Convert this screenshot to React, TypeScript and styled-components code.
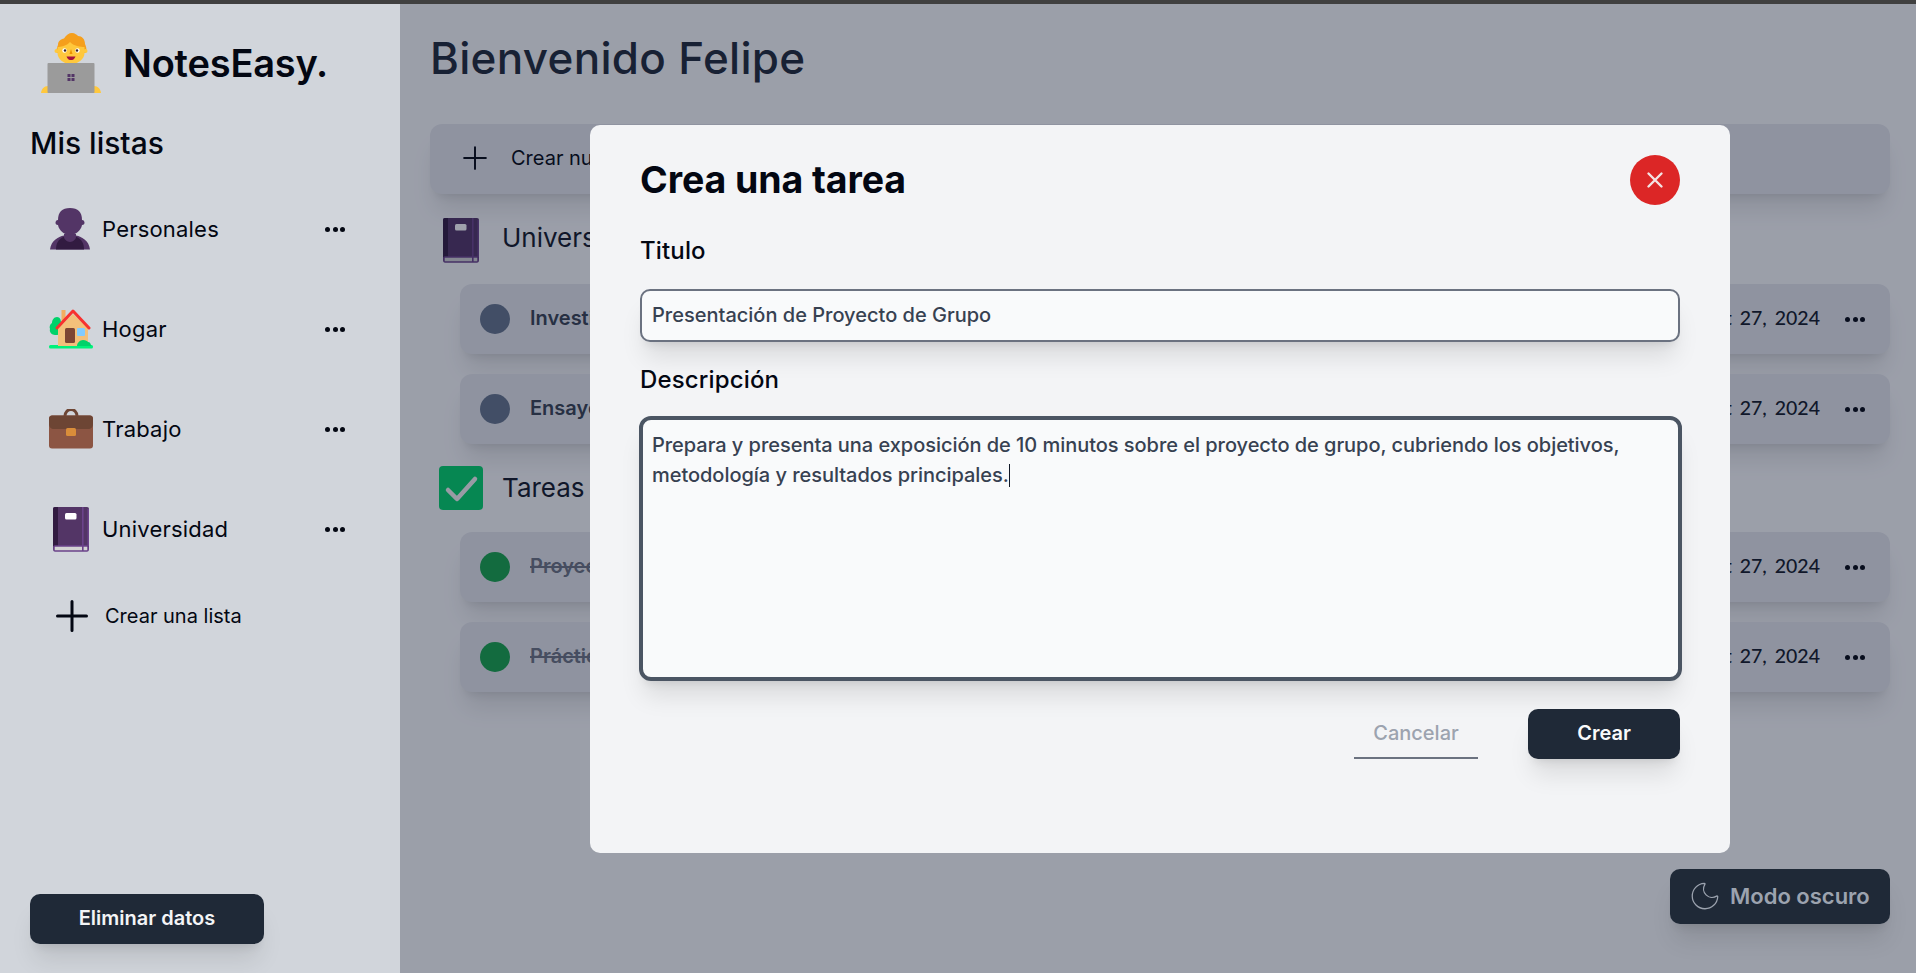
import React from "react";
import styled, { createGlobalStyle } from "styled-components";
import { Moon } from "lucide-react";

const SHADOW_XL = "0 20px 25px -5px rgba(0,0,0,.1),0 8px 10px -6px rgba(0,0,0,.1)";

const Global = createGlobalStyle`
  html, body { margin: 0; padding: 0; height: 100%; overflow: hidden; }
  body { font-family: Inter, "Noto Sans", sans-serif; background: #f9fafb; }
  #root { height: 100%; }
  * { box-sizing: border-box; }
`;

const Shell = styled.div`display:flex;flex-direction:column;height:973px;position:relative;`;
const TopBar = styled.div`height:4px;background:#404040;flex:none;`;
const Body = styled.div`display:flex;flex:1;min-height:0;`;

const Sidebar = styled.aside`
  width:400px;flex:none;background:#d1d5db;display:flex;flex-direction:column;padding:29px 0 29px 30px;color:#030712;
`;
const Brand = styled.div`display:flex;align-items:center;gap:22px;height:60px;padding-left:11px;`;
const BrandName = styled.h1`margin:0;font-size:38px;font-weight:600;letter-spacing:-.2px;color:#030712;`;
const ListsTitle = styled.h2`margin:32px 0 0;font-size:30px;line-height:36px;font-weight:500;color:#030712;`;
const Lists = styled.div`margin-top:18px;width:315px;display:flex;flex-direction:column;`;
const ListItem = styled.div`height:100px;display:flex;align-items:center;padding-left:19px;gap:9px;`;
const ListIcon = styled.div`width:44px;height:48px;flex:none;display:flex;align-items:center;justify-content:center;`;
const ListName = styled.span`flex:1;font-size:22px;font-weight:400;letter-spacing:.2px;color:#030712;`;
const Dots = styled.div`display:flex;gap:2.5px;width:20px;flex:none;
  span{width:5px;height:5px;border-radius:50%;background:#030712;display:block;}
`;
const CreateList = styled.div`height:74px;display:flex;align-items:center;padding-left:26px;gap:17px;font-size:20px;color:#030712;`;
const DangerButton = styled.button`
  margin-top:auto;width:234px;height:50px;border:0;border-radius:10px;background:#1f2937;color:#f3f4f6;font:600 20px Inter,sans-serif;padding:0 0 2px;
  box-shadow:${SHADOW_XL};
`;

const Main = styled.main`flex:1;min-width:0;position:relative;padding:26px 26px 0 30px;background:#f9fafb;overflow:hidden;`;
const Heading = styled.h2`margin:0;font-size:44px;line-height:56px;font-weight:500;letter-spacing:.3px;color:#1f2937;`;
const NewBar = styled.div`
  margin-top:38px;height:70px;border-radius:12px;background:#e5e7eb;display:flex;align-items:center;padding:0 0 2px 33px;gap:24px;font-size:20px;color:#030712;
  box-shadow:${SHADOW_XL};
`;
const SectionHead = styled.div<{ $top: number }>`margin-top:${p => p.$top}px;height:48px;display:flex;align-items:center;font-size:26px;color:#111827;`;
const SectionIcon = styled.div<{ $w: number; $pad: number; $gap: number }>`
  width:${p => p.$w}px;margin-left:${p => p.$pad}px;margin-right:${p => p.$gap}px;flex:none;display:flex;
`;
const SectionName = styled.span<{ $lift: number }>`padding-bottom:${p => p.$lift}px;`;
const TaskRow = styled.div`
  margin:20px 0 0 30px;height:70px;border-radius:12px;background:#e5e7eb;display:flex;align-items:center;padding:0 25px 0 20px;
  box-shadow:${SHADOW_XL};
`;
const Circle = styled.span<{ $done?: boolean }>`width:30px;height:30px;border-radius:50%;flex:none;background:${p => p.$done ? "#16a34a" : "#64748b"};`;
const TaskName = styled.span<{ $done?: boolean }>`
  flex:1;margin-left:20px;padding-bottom:2px;font-size:20px;font-weight:600;color:${p => p.$done ? "#6b7280" : "#374151"};text-decoration:${p => p.$done ? "line-through" : "none"};
`;
const TaskDate = styled.span`font-family:Lato,Inter,sans-serif;font-size:19.500px;word-spacing:3px;font-weight:500;color:#111827;margin-right:25px;padding-bottom:3px;`;

const Overlay = styled.div`
  position:absolute;inset:0;background:rgba(15,23,48,.4);display:flex;align-items:center;justify-content:center;padding-left:4px;
`;
const Modal = styled.section`
  width:1140px;height:728px;background:#f3f4f6;border-radius:10px;padding:30px 50px 0;display:flex;flex-direction:column;
`;
const ModalHeader = styled.div`display:flex;align-items:center;justify-content:space-between;height:50px;`;
const ModalTitle = styled.h3`margin:0;font-size:37.500px;font-weight:700;letter-spacing:-.1px;color:#030712;`;
const CloseButton = styled.button`width:50px;height:50px;border-radius:50%;border:0;background:#dc2626;padding:0;display:flex;align-items:center;justify-content:center;`;
const Label = styled.label<{ $top: number }>`display:block;margin-top:${p => p.$top}px;font-size:24px;line-height:30px;font-weight:500;letter-spacing:.15px;color:#030712;`;
const TitleInput = styled.input`
  display:block;margin-top:23px;width:100%;height:53px;border:2px solid #6b7280;border-radius:10px;background:#f9fafb;padding:0 10px;
  font:500 20px Inter,sans-serif;color:#374151;outline:none;
  box-shadow:${SHADOW_XL};
`;
const DescriptionField = styled.div`
  margin:21px -2px 0 -1px;height:265px;border:4px solid #4b5563;border-radius:12px;background:#f9fafb;padding:10px 9px;
  font-size:20px;line-height:30px;font-weight:500;letter-spacing:-.04px;color:#374151;
  box-shadow:${SHADOW_XL};
`;
const Caret = styled.span`display:inline-block;width:1px;height:23px;background:#111827;vertical-align:-5px;`;
const Actions = styled.div`margin-top:28px;display:flex;justify-content:flex-end;gap:50px;`;
const CancelButton = styled.button`
  width:124px;height:50px;border:0;border-bottom:2px solid #6b7280;background:transparent;padding:0;font:500 20px Inter,sans-serif;color:#9ca3af;
`;
const SubmitButton = styled.button`
  width:152px;height:50px;border:0;border-radius:10px;background:#1f2937;color:#f9fafb;font:600 20px Inter,sans-serif;padding:0 0 2px;
  box-shadow:${SHADOW_XL};
`;
const ThemeButton = styled.button`
  position:absolute;right:26px;bottom:49px;width:220px;height:55px;border:0;border-radius:10px;background:#1f2937;color:#9ca3af;
  display:flex;align-items:center;padding:0 0 2px 18px;gap:8px;font:600 22px Inter,sans-serif;
  box-shadow:${SHADOW_XL};
`;
const BustSvg = styled.svg`margin-left:-3px;`;

const Technologist = () => (
  <svg width="60" height="60" viewBox="0 0 60 60">
    <path d="M0 60c.5-4 3-7 7-7h46c4 0 6.500 3 7 7z" fill="#ffc83d" />
    <path d="M16 20c-1-3 0-6 1-8 0-4 3-6 6-6.500C25 2 28 0 31 0c3 0 5 2 6 3 4 0 7 3 7 8 1 2 2 5 1 9z" fill="#f59f1c" />
    <path d="M16.500 14C19 14 26 13 29 9c3 4 11 5 14.500 5V20c0 6-6 11-13.500 11S16.500 26 16.500 20z" fill="#ffc83d" />
    <circle cx="15.500" cy="18" r="2" fill="#ffc83d" /><circle cx="44.500" cy="18" r="2" fill="#ffc83d" />
    <circle cx="23.500" cy="17.500" r="2.200" fill="#fff" /><circle cx="36.500" cy="17.500" r="2.200" fill="#fff" />
    <circle cx="24" cy="17.500" r="1.200" fill="#372128" /><circle cx="36" cy="17.500" r="1.200" fill="#372128" />
    <path d="M30 16l-1.500 5h3z" fill="#ed9200" />
    <path d="M25.500 23.500h9c-1 3-3 3.500-4.500 3.500s-3.500-.5-4.500-3.500z" fill="#a6133c" />
    <rect x="6.500" y="30" width="47" height="30" rx="1" fill="#9b9b9b" />
    <rect x="26.500" y="41" width="3" height="3" fill="#533566" /><rect x="30.500" y="41" width="3" height="3" fill="#533566" />
    <rect x="26.500" y="45" width="3" height="3" fill="#533566" /><rect x="30.500" y="45" width="3" height="3" fill="#533566" />
  </svg>
);
const Bust = () => (
  <BustSvg width="40" height="42" viewBox="0 0 40 42">
    <path d="M0 41.500C1 33 8 28.500 14 27.500h12C32 28.500 39 33 40 41.500z" fill="#533566" />
    <path d="M6 41.500c0-6 2-10 8-13h12c6 3 8 7 8 13z" fill="#321b41" />
    <path d="M14 26h12v3c0 2-3 5-6 5s-6-3-6-5z" fill="#533566" />
    <path d="M8 12C8 4 12 0 20 0s12 4 12 12c2 0 2.500 2 2.500 2.700S34 17 32 17c-1 6-7 10-12 10S9 23 8 17c-2 0-2.500-1.500-2.500-2.300S6 12 8 12z" fill="#533566" />
  </BustSvg>
);
const House = () => (
  <svg width="44" height="40" viewBox="0 0 44 40">
    <rect x="0" y="36" width="44" height="3.500" rx="1.500" fill="#00f27a" />
    <rect x="9" y="24" width="3" height="13" fill="#7d4533" />
    <path d="M8 8c3 0 4 3 4 5 2 2 1 5 0 6 2 3 0 7-4 7-1 0-1.500 0-2 0-3 0-6-3-5-6-1-2 0-5 2-6 0-3 2-6 5-6z" fill="#00d26a" />
    <rect x="12.500" y="1" width="4" height="12" fill="#f3ad61" />
    <path d="M24 5L9 19v18h30V19z" fill="#f3c07b" />
    <path d="M8 19L24 2l16 17" fill="none" stroke="#f8312f" strokeWidth="3" strokeLinecap="round" strokeLinejoin="round" />
    <rect x="16" y="19" width="10" height="15" rx="1.500" fill="#7d4533" />
    <rect x="28" y="19" width="8" height="8" rx="1" fill="#83cbff" />
    <path d="M28 37c0-3 3-6 6-6s4 1 5 2c2 0 3 2 3 4z" fill="#00d26a" />
  </svg>
);
const Briefcase = () => (
  <svg width="44" height="40" viewBox="0 0 44 40">
    <path d="M16 7c0-4 3-6.500 6-6.500S28 3 28 7" fill="none" stroke="#6d4534" strokeWidth="3" />
    <rect x="0" y="6.500" width="44" height="33" rx="3" fill="#8c5543" />
    <path d="M3 6.500h38c1.500 0 3 1.500 3 3V15c0 3-2 5-5 5H5c-3 0-5-2-5-5V9.500c0-1.500 1.500-3 3-3z" fill="#6d4534" />
    <rect x="17" y="19" width="10" height="8" rx="1.500" fill="#d98d3a" />
  </svg>
);
const Book = () => (
  <svg width="36" height="45" viewBox="0 0 36 45">
    <rect x="0" y="0" width="36" height="44" rx="2" fill="#533566" />
    <path d="M2 0h3v39H0V2a2 2 0 012-2z" fill="#321b41" />
    <rect x="1" y="39" width="34" height="5" rx="1" fill="#d3d3d3" stroke="#6b438b" strokeWidth="1.500" />
    <rect x="29" y="0" width="1.600" height="44" fill="#6b438b" />
    <rect x="34.500" y="2" width="1.500" height="37" fill="#6b438b" />
    <rect x="12" y="6" width="11.500" height="6.500" rx="1.500" fill="#fff" />
  </svg>
);
const CheckBox = () => (
  <svg width="44" height="44" viewBox="0 0 44 44">
    <rect width="44" height="44" rx="4" fill="#00d26a" />
    <path d="M9 24l9 9 18-20" fill="none" stroke="#f4f4f4" strokeWidth="4.500" strokeLinecap="round" strokeLinejoin="round" />
  </svg>
);
const Plus = ({ size, stroke }: { size: number; stroke: number }) => (
  <svg width={size} height={size} viewBox="0 0 32 32" fill="none" stroke="#030712" strokeWidth={stroke} strokeLinecap="round">
    <path d="M16 1.500v29M1.500 16h29" />
  </svg>
);
const More = () => <Dots><span /><span /><span /></Dots>;

const lists = [
  { name: "Personales", icon: <Bust /> },
  { name: "Hogar", icon: <House /> },
  { name: "Trabajo", icon: <Briefcase /> },
  { name: "Universidad", icon: <Book /> },
];

const Task = ({ name, done }: { name: string; done?: boolean }) => (
  <TaskRow>
    <Circle $done={done} />
    <TaskName $done={done}>{name}</TaskName>
    <TaskDate>Oct 27, 2024</TaskDate>
    <More />
  </TaskRow>
);

export default function App() {
  return (
    <Shell>
      <Global />
      <TopBar />
      <Body>
        <Sidebar>
          <Brand>
            <Technologist />
            <BrandName>NotesEasy.</BrandName>
          </Brand>
          <ListsTitle>Mis listas</ListsTitle>
          <Lists>
            {lists.map(l => (
              <ListItem key={l.name}>
                <ListIcon>{l.icon}</ListIcon>
                <ListName>{l.name}</ListName>
                <More />
              </ListItem>
            ))}
          </Lists>
          <CreateList>
            <Plus size={32} stroke={3} />
            <span>Crear una lista</span>
          </CreateList>
          <DangerButton>Eliminar datos</DangerButton>
        </Sidebar>
        <Main>
          <Heading>Bienvenido Felipe</Heading>
          <NewBar>
            <Plus size={24} stroke={2.6} />
            <span>Crear nueva tarea</span>
          </NewBar>
          <SectionHead $top={22}>
            <SectionIcon $w={36} $pad={13} $gap={23}><Book /></SectionIcon>
            <SectionName $lift={5}>Universidad</SectionName>
          </SectionHead>
          <Task name="Investigación de campo" />
          <Task name="Ensayo de literatura" />
          <SectionHead $top={20}>
            <SectionIcon $w={44} $pad={9} $gap={19}><CheckBox /></SectionIcon>
            <SectionName $lift={2}>Tareas completadas</SectionName>
          </SectionHead>
          <Task name="Proyecto final" done />
          <Task name="Práctica de laboratorio" done />
          <Overlay>
            <Modal>
              <ModalHeader>
                <ModalTitle>Crea una tarea</ModalTitle>
                <CloseButton aria-label="Cerrar">
                  <svg width="18" height="18" viewBox="0 0 18 18" stroke="#f3e3e3" strokeWidth="2.400" strokeLinecap="round">
                    <path d="M2.500 2.500l13 13M15.500 2.500l-13 13" />
                  </svg>
                </CloseButton>
              </ModalHeader>
              <Label $top={31}>Titulo</Label>
              <TitleInput readOnly value="Presentación de Proyecto de Grupo" />
              <Label $top={23}>Descripción</Label>
              <DescriptionField role="textbox">
                Prepara y presenta una exposición de 10 minutos sobre el proyecto de grupo, cubriendo los objetivos, metodología y resultados principales.<Caret />
              </DescriptionField>
              <Actions>
                <CancelButton>Cancelar</CancelButton>
                <SubmitButton>Crear</SubmitButton>
              </Actions>
            </Modal>
          </Overlay>
          <ThemeButton><Moon size={34} strokeWidth={0.9} />Modo oscuro</ThemeButton>
        </Main>
      </Body>
    </Shell>
  );
}
